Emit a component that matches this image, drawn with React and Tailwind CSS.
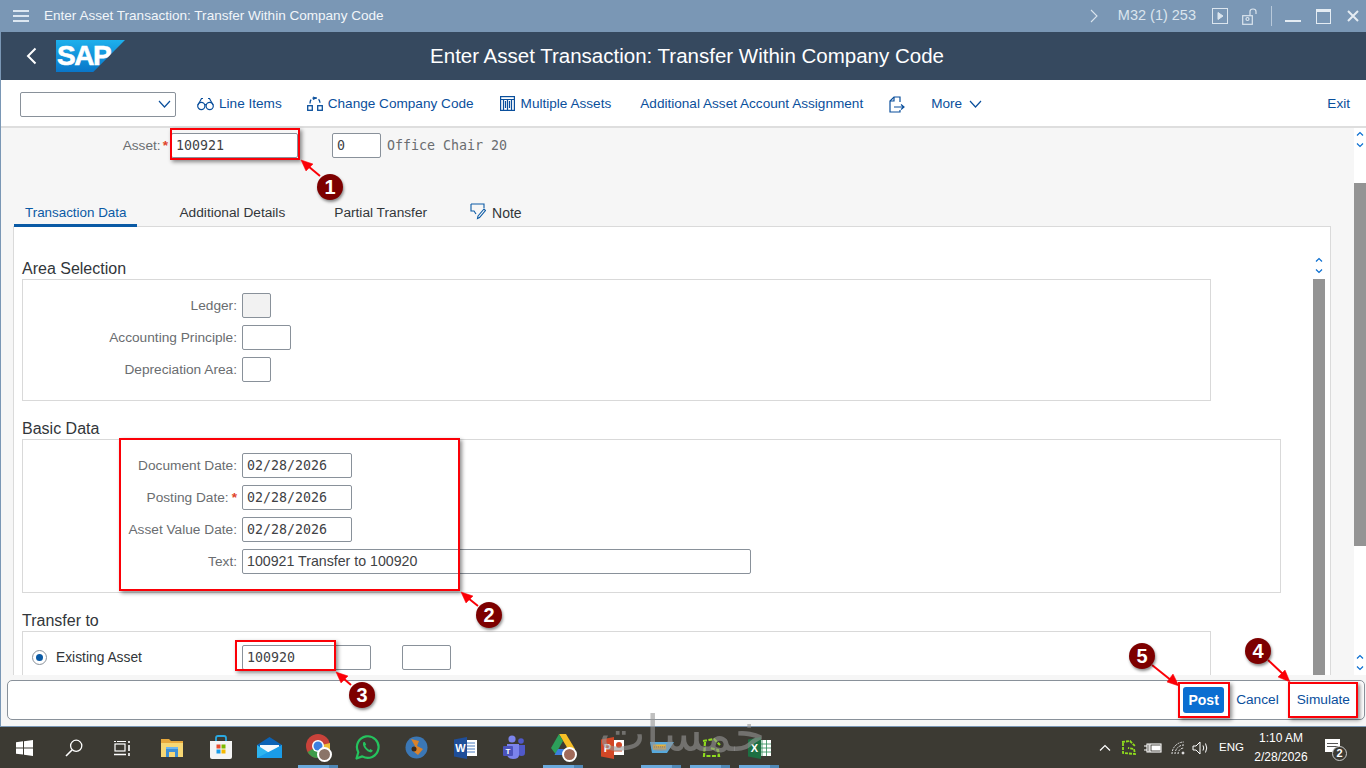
const SANS = { fontFamily: '"Liberation Sans", Arial, sans-serif' };

function Chev({ up, className = '' }) {
  return (
    <svg width="8" height="6" viewBox="0 0 8 6" className={className} fill="none" stroke="#0a6ed1" strokeWidth="1.2">
      <path d={up ? 'M1 4.5 L4 1.5 L7 4.5' : 'M1 1.5 L4 4.5 L7 1.5'} />
    </svg>
  );
}

function Field({ w, value, mono = true, bg = 'bg-white' }) {
  return (
    <div
      className={`h-[25px] shrink-0 border border-[#89919a] rounded-[2px] ${bg} flex items-center pl-[4px] text-[#3f4245] whitespace-nowrap ${mono ? "font-['DejaVu_Sans_Mono'] text-[13.3px]" : 'text-[14.2px]'}`}
      style={{ width: w }}
    >
      {value}
    </div>
  );
}

function Row({ label, star, children }) {
  return (
    <div className="flex items-center gap-[5px] h-[25px]">
      <div className="w-[214px] pt-[1px] text-right text-[13.7px] text-[#6a6d70] whitespace-nowrap">
        {label}
        {star && <span className="text-[#e0442b] font-bold pl-[3px]">*</span>}
      </div>
      {children}
    </div>
  );
}

function SectionHead({ children, className = '' }) {
  return <div className={`h-[20px] pt-[2px] mb-[1px] flex items-center text-[16px] leading-none text-[#32363a] ${className}`}>{children}</div>;
}

function ToolItem({ icon, children, className = '' }) {
  return (
    <div className={`flex items-center gap-[5px] text-[13.6px] text-[#0a4f9c] whitespace-nowrap ${className}`}>
      {icon}
      {children}
    </div>
  );
}

const IGlasses = () => (
  <svg width="17" height="16" viewBox="0 0 17 16" fill="none" stroke="#0a4f9c" strokeWidth="1.2">
    <circle cx="4.3" cy="10" r="3.6" /><circle cx="12.7" cy="10" r="3.6" />
    <path d="M7.6 9 Q8.5 8 9.4 9 M1 9 L4.5 2.5 H6 M16 9 L12.5 2.5 H11" />
  </svg>
);
const ICompany = () => (
  <svg width="16" height="15" viewBox="0 0 16 15" fill="none" stroke="#0a4f9c" strokeWidth="1.3">
    <rect x="0.7" y="9.7" width="4.6" height="4.6" /><rect x="10.7" y="9.7" width="4.6" height="4.6" />
    <path d="M3 7.5 Q3 2 8 2 Q13 2 13 7.5" strokeDasharray="4 2" />
    <path d="M6 1 L8.5 2 L6 3.5" />
  </svg>
);
const IMultiple = () => (
  <svg width="15" height="15" viewBox="0 0 15 15" fill="none" stroke="#0a4f9c" strokeWidth="1.2">
    <rect x="0.6" y="0.6" width="13.8" height="13.8" />
    <path d="M0.6 3.5 H14.4 M3.5 3.5 V14 M7.5 3.5 V14 M11.5 3.5 V14 M5.5 5 V12 M9.5 5 V12" />
  </svg>
);
const IExport = () => (
  <svg width="16" height="17" viewBox="0 0 16 17" fill="none" stroke="#0a4f9c" strokeWidth="1.2">
    <path d="M11 6 V1 H5 L1 5 V16 H11 V14" /><path d="M5 1 V5 H1" />
    <path d="M5 11 H15 M12 8.5 L15 11 L12 13.5" />
  </svg>
);

const Taskbar = {
  win: (
    <svg width="17" height="16" viewBox="0 0 17 16" fill="#fff">
      <path d="M0 2.3 L7 1.3 V7.4 H0 Z M8 1.2 L17 0 V7.4 H8 Z M0 8.4 H7 V14.6 L0 13.7 Z M8 8.4 H17 V16 L8 14.8 Z" />
    </svg>
  ),
  search: (
    <svg width="18" height="18" viewBox="0 0 18 18" fill="none" stroke="#fff" strokeWidth="1.3">
      <circle cx="11.2" cy="6.8" r="5.6" /><path d="M7 11 L1 17" strokeWidth="1.6" />
    </svg>
  ),
  task: (
    <svg width="17" height="16" viewBox="0 0 17 16" fill="none" stroke="#fff" strokeWidth="1.2">
      <path d="M0 1.5 H2 M3 1.5 H12" /><rect x="1" y="4" width="10" height="7" /><path d="M0 14.5 H12 M15 1 V3 M15 5 V11 M15 13 V16" strokeWidth="1.6" />
    </svg>
  ),
  folder: (
    <svg width="22" height="20" viewBox="0 0 22 20">
      <path d="M0 1 H8 L10 3 H22 V18 H0 Z" fill="#e8a93d" /><path d="M0 5 H22 V19 H0 Z" fill="#f7d774" />
      <path d="M5 19 V11 H17 V19 H14 V14 H8 V19 Z" fill="#3d8fd6" /><rect x="5" y="9" width="12" height="2" fill="#6cb5ef" />
    </svg>
  ),
  store: (
    <svg width="24" height="25" viewBox="0 0 24 25">
      <path d="M7 7 V3 Q7 1 9 1 H15 Q17 1 17 3 V7" fill="none" stroke="#2aa8e0" strokeWidth="1.8" />
      <path d="M1 6 H23 V22 Q23 24 21 24 H3 Q1 24 1 22 Z" fill="#f4f4f4" />
      <rect x="7.5" y="9.5" width="4" height="4" fill="#e74c2e" /><rect x="12.5" y="9.5" width="4" height="4" fill="#7db900" />
      <rect x="7.5" y="14.5" width="4" height="4" fill="#1a9ce8" /><rect x="12.5" y="14.5" width="4" height="4" fill="#f6b800" />
    </svg>
  ),
  mail: (
    <svg width="25" height="22" viewBox="0 0 25 22">
      <path d="M0 8 L12.5 0 L25 8 V21 H0 Z" fill="#0b62b5" /><path d="M3 8 H22 V13 L12.5 17 L3 13 Z" fill="#f4f8fc" />
      <path d="M0 8 L12.5 16 L25 8 V21 H0 Z" fill="#2db4ee" /><path d="M25 8 V21 H0 Z" fill="#1a9ce8" />
    </svg>
  ),
  chrome: (
    <div className="relative w-[26px] h-[28px]">
      <svg width="24" height="24" viewBox="0 0 24 24">
        <circle cx="12" cy="12" r="12" fill="#c9423a" /><path d="M12 12 L1.6 18 A12 12 0 0 0 14 23.8 Z" fill="#3e9c4a" /><path d="M12 12 L24 9 A12 12 0 0 1 14 23.8 Z" fill="#edbd36" />
        <circle cx="12" cy="12" r="6" fill="#fff" /><circle cx="12" cy="12" r="4.5" fill="#3d7fe0" />
      </svg>
      <div className="absolute right-0 bottom-0 w-[15px] h-[15px] rounded-full bg-[#8a7468] border-2 border-white" />
    </div>
  ),
  whats: (
    <svg width="25" height="25" viewBox="0 0 25 25" fill="none">
      <path d="M1.5 23.5 L3.3 17.3 A10.8 10.8 0 1 1 7.3 21.4 Z" stroke="#25c35e" strokeWidth="2.2" strokeLinejoin="round" />
      <path d="M8.5 7 Q7 9.5 9.5 13 Q12.5 17 16 17.5 L18 15.8 L15.5 14 L14.2 15 Q11.5 13.5 10.2 10.8 L11.2 9.5 L9.8 7 Z" fill="#25c35e" />
    </svg>
  ),
  fox: (
    <svg width="23" height="23" viewBox="0 0 23 23">
      <circle cx="11.5" cy="11.5" r="11" fill="#3b77b5" /><path d="M6 3 L14 5 L12 10 L18 13 L13 19 L8 15 L10 10 Z" fill="#d9822b" /><circle cx="9" cy="13" r="2.5" fill="#3c2a1a" />
    </svg>
  ),
  word: (
    <svg width="23" height="22" viewBox="0 0 23 22">
      <rect x="9" y="3" width="14" height="16" fill="#fff" /><path d="M11 6 H21 M11 9 H21 M11 12 H21 M11 15 H21" stroke="#4a7cc0" />
      <path d="M0 2.5 L13 0 V22 L0 19.5 Z" fill="#1f4e99" />
      <text x="6.5" y="15" textAnchor="middle" fontSize="11" fontWeight="700" fill="#fff" fontFamily="Liberation Sans">W</text>
    </svg>
  ),
  teams: (
    <svg width="23" height="25" viewBox="0 0 23 25">
      <circle cx="9" cy="4" r="3.6" fill="#7b83eb" /><circle cx="18" cy="6" r="2.8" fill="#5059c9" />
      <path d="M14 10 H22 V18 Q22 21 18.5 21 Q15 21 14 18 Z" fill="#5059c9" /><path d="M4 9 H16 V20 Q16 24 10 24 Q5 24 4 20 Z" fill="#7b83eb" />
      <rect x="0" y="11" width="10" height="10" rx="1" fill="#4b53bc" />
      <text x="5" y="19" textAnchor="middle" fontSize="8" fontWeight="700" fill="#fff" fontFamily="Liberation Sans">T</text>
    </svg>
  ),
  drive: (
    <div className="relative w-[26px] h-[28px]">
      <svg width="24" height="22" viewBox="0 0 24 22">
        <path d="M8 0 H15 L24 15 H17 Z" fill="#f6bf26" /><path d="M8 0 L12 7 L4.5 20 L0 14 Z" fill="#2c9f5a" /><path d="M7 15 H24 L20 21 H3.5 Z" fill="#3c7ee0" />
      </svg>
      <div className="absolute right-0 bottom-0 w-[15px] h-[15px] rounded-full bg-[#a06a5a] border-2 border-white" />
    </div>
  ),
  ppt: (
    <svg width="23" height="22" viewBox="0 0 23 22">
      <rect x="9" y="3" width="14" height="15" fill="#fff" /><circle cx="18" cy="8" r="3" fill="#d24726" /><path d="M13 14 H21" stroke="#d24726" />
      <path d="M0 2.5 L13 0 V22 L0 19.5 Z" fill="#d24726" />
      <text x="6.5" y="15" textAnchor="middle" fontSize="11" fontWeight="700" fill="#fff" fontFamily="Liberation Sans">P</text>
    </svg>
  ),
  blueApp: (
    <svg width="24" height="13" viewBox="0 0 24 13">
      <path d="M0 1 H24 L17 12 H2 Z" fill="#57a9dc" /><rect x="3" y="3.5" width="13" height="5" fill="#e8b23a" /><path d="M4 6 H15" stroke="#8a5f10" strokeDasharray="1 1" />
    </svg>
  ),
  greenDash: (
    <svg width="20" height="20" viewBox="0 0 20 20" fill="none" stroke="#8fdc1e" strokeWidth="2.2" strokeDasharray="4 1.5">
      <path d="M2 3 L13 1 L19 7 M4 4 L3 18 L18 18 L17 12 L9 10" />
    </svg>
  ),
  excel: (
    <svg width="23" height="22" viewBox="0 0 23 22">
      <rect x="9" y="3" width="14" height="16" fill="#fff" /><path d="M14 3 V19 M18.5 3 V19 M9 7 H23 M9 11 H23 M9 15 H23" stroke="#2c8a55" strokeWidth="0.8" />
      <path d="M0 2.5 L13 0 V22 L0 19.5 Z" fill="#1d6f42" />
      <text x="6.5" y="15" textAnchor="middle" fontSize="11" fontWeight="700" fill="#fff" fontFamily="Liberation Sans">X</text>
    </svg>
  ),
};

const taskItems = [
  ['win'], ['search'], ['task'], ['folder'], ['store'], ['mail'], ['chrome', true], ['whats'], ['fox'], ['word'], ['teams'],
  ['drive', true], ['ppt'], ['blueApp', true], ['greenDash', true], ['excel', true],
];

function Badge({ n, className }) {
  return (
    <div className={`absolute w-[26px] h-[26px] rounded-full bg-[#7d0000] text-white font-bold text-[20px] flex items-center justify-center shadow-[1px_2px_3px_rgba(0,0,0,0.45)] ${className}`}>
      {n}
    </div>
  );
}

function RedBox({ className }) {
  return <div className={`absolute border-2 border-[#fb0007] shadow-[2px_2px_4px_rgba(0,0,0,0.45)] ${className}`} />;
}

export default function App() {
  return (
    <div className="relative w-[1366px] h-[768px] overflow-hidden flex flex-col bg-white" style={SANS}>
      {/* title bar */}
      <div className="h-8 shrink-0 bg-[#7a97b5] flex items-center text-[13.55px] text-[#f1f5f9]">
        <div className="w-[44px] shrink-0 pl-[13px]">
          <div className="w-[16px] flex flex-col gap-[3px]">
            <div className="h-[2px] bg-[#dce7f1]" /><div className="h-[2px] bg-[#dce7f1]" /><div className="h-[2px] bg-[#dce7f1]" />
          </div>
        </div>
        <div className="whitespace-nowrap">Enter Asset Transaction: Transfer Within Company Code</div>
        <div className="ml-auto flex items-center text-[#dbe5ee]">
          <svg width="8" height="14" viewBox="0 0 8 14" fill="none" stroke="#dbe5ee" strokeWidth="1.1"><path d="M1 1 L7 7 L1 13" /></svg>
          <span className="ml-[20px] whitespace-nowrap text-[14.5px]">M32 (1) 253</span>
          <svg className="ml-[16px]" width="16" height="16" viewBox="0 0 16 16" fill="none" stroke="#dbe5ee"><rect x="0.5" y="0.5" width="15" height="15" /><path d="M6 4.5 L11 8 L6 11.5 Z" fill="#dbe5ee" /></svg>
          <svg className="ml-[14px]" width="16" height="17" viewBox="0 0 16 17" fill="none" stroke="#dbe5ee" strokeWidth="1.2"><rect x="0.7" y="7.7" width="9.6" height="8.6" /><circle cx="5.5" cy="11" r="1.5" /><path d="M8 7.5 V3.5 Q8 1 11 1 Q14 1 14 3.5 V6" /></svg>
          <div className="ml-[13px] w-px h-[20px] bg-[#b8c9da]" />
          <div className="ml-[13px] w-[16px] h-[2px] bg-[#e4ecf3] mt-[10px]" />
          <div className="ml-[15px] w-[15px] h-[15px] border border-[#e4ecf3] border-t-[3px]" />
          <svg className="ml-[16px] mr-[7px]" width="12" height="12" viewBox="0 0 12 12" stroke="#e4ecf3" strokeWidth="2"><path d="M1 1 L11 11 M11 1 L1 11" /></svg>
        </div>
      </div>

      <div className="flex-1 min-h-0 flex flex-col border-l border-[#7a97b5]">
        {/* header */}
        <div className="relative h-12 shrink-0 bg-[#36495f] flex items-center justify-center">
          <svg className="absolute left-[25px] top-[15px]" width="11" height="18" viewBox="0 0 11 18" fill="none" stroke="#fff" strokeWidth="2"><path d="M9.5 1.5 L2 9 L9.5 16.5" /></svg>
          <div className="absolute left-[55px] top-[8px] w-[69px] h-[32px] bg-gradient-to-b from-[#1eb0ec] to-[#0a76c9] [clip-path:polygon(0_0,100%_0,54%_100%,0_100%)] flex items-center pl-[1px]">
            <span className="text-white font-bold text-[28px] leading-none tracking-[-1.5px] [-webkit-text-stroke:0.6px_white]">SAP</span>
          </div>
          <div className="text-[20.5px] text-white whitespace-nowrap pl-[7px]">Enter Asset Transaction: Transfer Within Company Code</div>
        </div>

        {/* toolbar */}
        <div className="h-12 shrink-0 bg-white border-b-2 border-b-[#dedede] pt-[2px] flex items-center pl-[19px] pr-[16px]">
          <div className="w-[156px] h-[25px] border border-[#89919a] rounded-[2px] flex items-center justify-end pr-[4px]">
            <svg width="13" height="8" viewBox="0 0 13 8" fill="none" stroke="#0a4f9c" strokeWidth="1.2"><path d="M1 1 L6.5 7 L12 1" /></svg>
          </div>
          <ToolItem icon={<IGlasses />} className="ml-[21px] gap-[4px]">Line Items</ToolItem>
          <ToolItem icon={<ICompany />} className="ml-[25px]">Change Company Code</ToolItem>
          <ToolItem icon={<IMultiple />} className="ml-[26px] gap-[6px]">Multiple Assets</ToolItem>
          <ToolItem className="ml-[29px]">Additional Asset Account Assignment</ToolItem>
          <ToolItem icon={<IExport />} className="ml-[26px]" />
          <ToolItem className="ml-[26px] gap-[7px]">
            More
            <svg width="13" height="8" viewBox="0 0 13 8" fill="none" stroke="#0a4f9c" strokeWidth="1.2"><path d="M1 1 L6.5 7 L12 1" /></svg>
          </ToolItem>
          <ToolItem className="ml-auto">Exit</ToolItem>
        </div>

        {/* content */}
        <div className="h-[547px] shrink-0 flex bg-[#f6f6f6] overflow-hidden">
          <div className="flex-1 min-w-0 flex flex-col pl-[12px]">
            <div className="mt-[5px] h-[25px] shrink-0 flex items-center">
              <div className="w-[155px] pt-[1px] text-right text-[13.7px] text-[#6a6d70] whitespace-nowrap">
                Asset:<span className="text-[#e0442b] font-bold pl-[2px]">*</span>
              </div>
              <div className="ml-[3px]"><Field w={127} value="100921" /></div>
              <div className="ml-[34px]"><Field w={49} value="0" /></div>
              <div className="ml-[6px] font-['DejaVu_Sans_Mono'] text-[13.3px] text-[#6a6d70] whitespace-nowrap">Office Chair 20</div>
            </div>

            {/* tabs */}
            <div className="mt-[39px] h-[30px] shrink-0 flex text-[13.7px] text-[#32363a] relative">
              <div className="ml-[1px] px-[11px] pt-[6px] text-[13.4px] text-[#0a5aa5] border-b-[3px] border-[#0a5aa5] whitespace-nowrap">Transaction Data</div>
              <div className="ml-[42px] pt-[6px] whitespace-nowrap">Additional Details</div>
              <div className="ml-[49px] pt-[6px] whitespace-nowrap">Partial Transfer</div>
              <div className="ml-[43px] pt-[6px] flex items-start gap-[6px] text-[14px] whitespace-nowrap">
                <svg width="16" height="17" viewBox="0 0 16 17" fill="none" stroke="#0a5aa5" strokeWidth="1.1">
                  <path d="M1 1 H14 V5 M1 1 V8 H4 L6 11" /><path d="M8 13 L14 6 L15.5 7.5 L9.5 14.5 L7.5 15.5 Z" />
                </svg>
                Note
              </div>
            </div>

            {/* white panel */}
            <div className="flex-1 min-h-0 w-[1318px] -mt-[1px] bg-white border border-[#dadada] border-b-0 flex overflow-hidden">
              <div className="w-[1299px] shrink-0 pl-[8px] pt-[31px]">
                <SectionHead>Area Selection</SectionHead>
                <div className="w-[1189px] h-[122px] border border-[#d9d9d9] pt-[13px] flex flex-col gap-[7px]">
                  <Row label="Ledger:"><Field w={29} bg="bg-[#f2f2f2]" /></Row>
                  <Row label="Accounting Principle:"><Field w={49} /></Row>
                  <Row label="Depreciation Area:"><Field w={29} /></Row>
                </div>

                <SectionHead className="mt-[17px]">Basic Data</SectionHead>
                <div className="w-[1259px] h-[154px] border border-[#d9d9d9] pt-[13px] flex flex-col gap-[7px]">
                  <Row label="Document Date:"><Field w={110} value="02/28/2026" /></Row>
                  <Row label="Posting Date:" star><Field w={110} value="02/28/2026" /></Row>
                  <Row label="Asset Value Date:"><Field w={110} value="02/28/2026" /></Row>
                  <Row label="Text:"><Field w={509} mono={false} value="100921 Transfer to 100920" /></Row>
                </div>

                <SectionHead className="mt-[17px]">Transfer to</SectionHead>
                <div className="w-[1189px] h-[80px] border border-[#d9d9d9] pt-[13px] flex items-start">
                  <div className="h-[25px] flex items-center text-[13.8px] text-[#32363a]">
                    <div className="ml-[9px] w-[15px] h-[15px] rounded-full border border-[#89919a] flex items-center justify-center">
                      <div className="w-[7px] h-[7px] rounded-full bg-[#0a5aa5]" />
                    </div>
                    <span className="ml-[9px] pt-[1px] w-[186px] whitespace-nowrap">Existing Asset</span>
                  </div>
                  <Field w={129} value="100920" />
                  <div className="ml-[31px]"><Field w={49} /></div>
                </div>
              </div>
              <div className="w-[12px] shrink-0 flex flex-col items-center pt-[30px]">
                <Chev up />
                <Chev className="mt-[5px]" />
                <div className="mt-[5px] flex-1 w-full bg-[#949494]" />
              </div>
            </div>
          </div>

          {/* outer scrollbar */}
          <div className="w-[12px] shrink-0 bg-white flex flex-col items-center pt-[3px]">
            <Chev up />
            <Chev className="mt-[5px]" />
            <div className="mt-[35px] h-[363px] w-full shrink-0 bg-[#949494]" />
            <Chev up className="mt-[108px]" />
            <Chev className="mt-[5px]" />
          </div>
        </div>

        {/* footer */}
        <div className="h-[51px] shrink-0 bg-[#f6f6f6] pt-[5px] pl-[6px] pr-[1px]">
          <div className="h-[40px] bg-white border border-[#89919a] rounded-[5px] flex items-center justify-end text-[13.7px] text-[#0a4f9c] pr-[14px]">
            <div className="w-[41px] h-[26px] bg-[#0a6ed1] rounded-[3px] text-white text-[14px] font-bold flex items-center justify-center">Post</div>
            <span className="ml-[12px]">Cancel</span>
            <span className="ml-[18px]">Simulate</span>
          </div>
        </div>
      </div>

      {/* taskbar */}
      <div className="relative h-[42px] shrink-0 bg-[#3c3a33] border-t border-[#7a97b5] flex items-center text-white text-[12px]">
        {taskItems.map(([k, active]) => (
          <div key={k} className="relative w-[49px] h-full shrink-0 flex items-center justify-center">
            {Taskbar[k]}
            {active && (
              <div className="absolute bottom-0 left-[4px] flex h-[3px] w-[40px]">
                <div className="w-[31px] bg-[#6aa9dc]" /><div className="w-[9px] bg-[#4f87b5]" />
              </div>
            )}
          </div>
        ))}
        <div className="ml-auto flex items-center">
          <svg width="12" height="7" viewBox="0 0 12 7" fill="none" stroke="#fff" strokeWidth="1.2"><path d="M1 6.5 L6 1.5 L11 6.5" /></svg>
          <svg className="ml-[10px]" width="15" height="15" viewBox="0 0 15 15" fill="none" stroke="#8fdc1e" strokeWidth="1.8" strokeDasharray="3 1"><path d="M1 2 L9 1 L14 6 M2 3 L2 13 L14 14 L13 9 L7 8" /></svg>
          <svg className="ml-[8px]" width="18" height="12" viewBox="0 0 18 12" fill="none" stroke="#fff" strokeWidth="1.1"><path d="M0 4 H3 M0 8 H3 M3 2 H5 V10 H3 Z" /><rect x="6" y="2" width="11" height="8" /><rect x="8" y="4" width="8" height="4" fill="#fff" /></svg>
          <svg className="ml-[9px]" width="15" height="14" viewBox="0 0 15 14" fill="none" stroke="#e8e8e8" strokeWidth="1"><path d="M1 13 A12 12 0 0 1 13 1 M4 13 A9 9 0 0 1 13 4 M7 13 A6 6 0 0 1 13 7" strokeDasharray="2 1" /><circle cx="12" cy="12" r="1" fill="#e8e8e8" /></svg>
          <svg className="ml-[6px]" width="17" height="14" viewBox="0 0 17 14" fill="none" stroke="#fff" strokeWidth="1"><path d="M1 5 H4 L8 1 V13 L4 9 H1 Z" /><path d="M11 4.5 Q12.5 7 11 9.5 M13.5 2.5 Q16 7 13.5 11.5" /></svg>
          <span className="ml-[10px] w-[32px] text-[11.5px]">ENG</span>
          <div className="w-[60px] mt-[1px] flex flex-col items-center leading-[19px]">
            <span>1:10 AM</span>
            <span>2/28/2026</span>
          </div>
          <div className="relative ml-[14px] mr-[23px] w-[18px] h-[28px]">
            <div className="absolute left-0 top-[5px] w-[15px] h-[13px] bg-white flex flex-col justify-center gap-[2px] px-[2px]">
              <div className="h-px bg-[#555]" /><div className="h-px bg-[#555]" />
            </div>
            <div className="absolute left-[7px] top-[12px] w-[15px] h-[15px] rounded-full bg-[#3c3a33] border border-[#ccc] flex items-center justify-center text-[11px] font-bold">2</div>
          </div>
        </div>
      </div>

      {/* watermark */}
      <div className="absolute left-[592px] top-[704px] w-[180px] leading-[60px] pointer-events-none font-['DejaVu_Sans'] text-[50px] text-[#969696]/60 whitespace-nowrap text-center">
        خمسات
      </div>

      {/* annotations */}
      <div className="absolute inset-0 pointer-events-none">
        <RedBox className="left-[170px] top-[128px] w-[130px] h-[32px]" />
        <RedBox className="left-[119px] top-[438px] w-[341px] h-[153px]" />
        <RedBox className="left-[235px] top-[640px] w-[101px] h-[31px]" />
        <RedBox className="left-[1178px] top-[682px] w-[52px] h-[36px]" />
        <RedBox className="left-[1288px] top-[682px] w-[70px] h-[36px]" />
        <svg className="absolute inset-0" width="1366" height="768" fill="#fb0007" stroke="#fb0007" strokeWidth="2">
          <path d="M320 176 L308 166" /><path d="M301 160 L313 164 L306 171 Z" strokeWidth="0.5" />
          <path d="M478 606 L468 598" /><path d="M461 592 L473 596 L466 603 Z" strokeWidth="0.5" />
          <path d="M351 685 L343 678" /><path d="M336 672 L348 676 L341 683 Z" strokeWidth="0.5" />
          <path d="M1268 660 L1284 675" /><path d="M1290 682 L1278 677 L1285 670 Z" strokeWidth="0.5" />
          <path d="M1152 665 L1172 681" /><path d="M1179 686 L1167 682 L1173 674 Z" strokeWidth="0.5" />
        </svg>
        <Badge n="1" className="left-[317px] top-[174px]" />
        <Badge n="2" className="left-[476px] top-[602px]" />
        <Badge n="3" className="left-[349px] top-[682px]" />
        <Badge n="4" className="left-[1245px] top-[638px]" />
        <Badge n="5" className="left-[1129px] top-[643px]" />
      </div>
    </div>
  );
}
